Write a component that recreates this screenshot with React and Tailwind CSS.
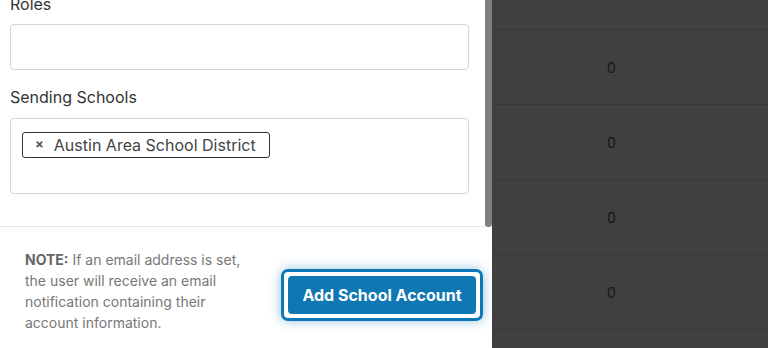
import React from "react";

const rows = [0, 0, 0, 0];

export default function App() {
  return (
    <div className="flex h-[348px] w-[768px] overflow-hidden bg-white font-['Inter',sans-serif]">
      {/* form panel */}
      <div className="flex w-[492px] shrink-0 flex-col bg-white">
        <div className="flex h-[227px] shrink-0">
          <div className="flex-1 overflow-hidden border-b border-[#e5e7eb] pl-[10px] pr-[16px]">
            <label className="-mt-[8px] mb-[8px] block text-[16px] leading-[24px] text-[#333]">Roles</label>
            <div className="h-[46px] rounded-[4px] border border-[#d1d5db]" />
            <label className="mb-[9px] mt-[15px] block text-[16px] leading-[24px] text-[#333]">Sending Schools</label>
            <div className="h-[76px] rounded-[4px] border border-[#d1d5db] px-[11px] pt-[12px]">
              <span className="inline-flex h-[26px] items-center gap-[10px] rounded-[3px] border border-[#333] pl-[12px] pr-[13px] text-[16px] text-[#444]">
                <span className="text-[13px] font-bold text-[#555]">×</span>
                Austin Area School District
              </span>
            </div>
          </div>
          <div className="w-[7px] rounded-b-[3px] bg-[#808080]" />
        </div>
        <div className="flex flex-1 items-start justify-between pl-[25px] pr-[9px] pt-[22px]">
          <p className="w-[228px] text-[14px] leading-[21px] text-[#777]">
            <span className="font-bold text-[#666]">NOTE:</span> If an email address is set, the user will receive an email
            notification containing their account information.
          </p>
          <div className="mt-[20px] rounded-[7px] border-[3px] border-[#0e77b5] bg-white p-[4px] shadow-[0_0_12px_rgba(16,119,181,0.45)]">
            <button className="h-[38px] w-[188px] rounded-[4px] bg-[#1077b5] text-[16px] font-bold text-white">
              Add School Account
            </button>
          </div>
        </div>
      </div>
      {/* dimmed table */}
      <div className="flex flex-1 flex-col bg-[#404040]">
        <div className="h-[30px] shrink-0 border-b border-[#373737]" />
        {rows.map((v, i) => (
          <div key={i} className="flex h-[75px] shrink-0 items-center border-b border-[#373737] pl-[115px] text-[14px] text-[#151515]">
            {v}
          </div>
        ))}
      </div>
    </div>
  );
}
